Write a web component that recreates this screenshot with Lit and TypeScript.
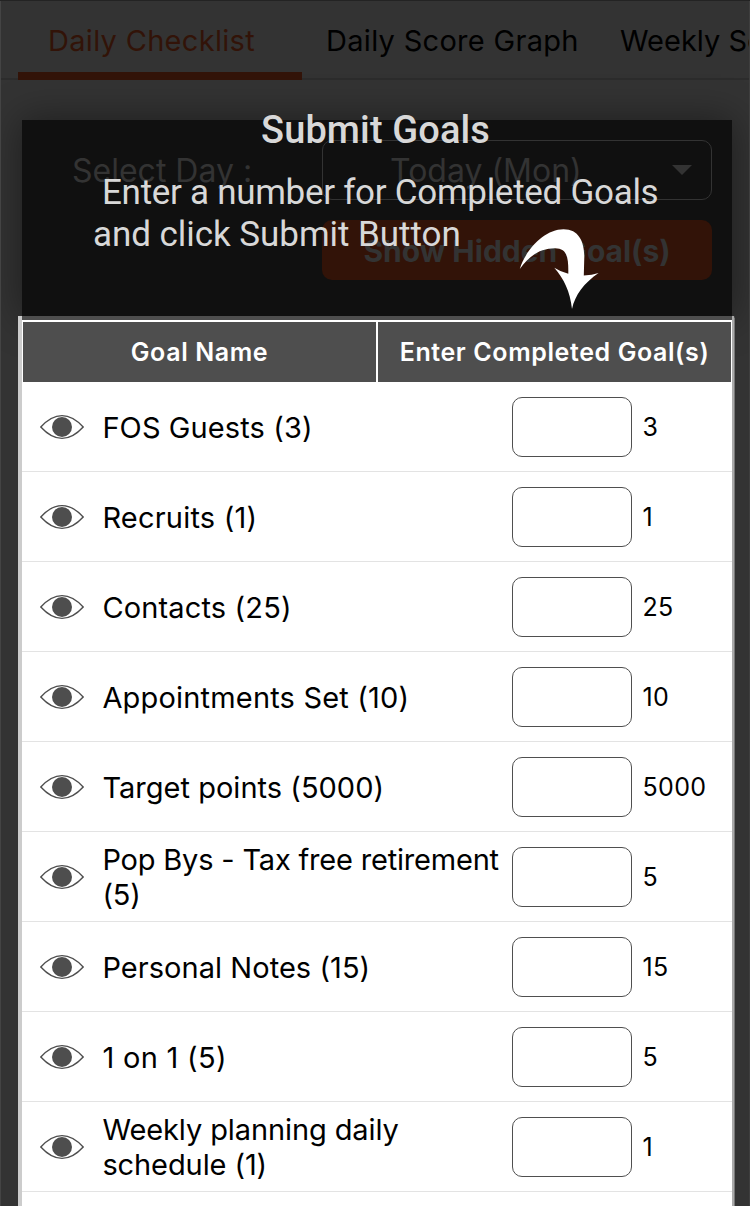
import { LitElement, html, css } from "lit";
import { customElement, property } from "lit/decorators.js";

interface Goal {
  name: string;
  target: number;
  tracking: number;
}

const GOALS: Goal[] = [
  { name: "FOS Guests", target: 3, tracking: 0.1 },
  { name: "Recruits", target: 1, tracking: 0.2 },
  { name: "Contacts", target: 25, tracking: 0.15 },
  { name: "Appointments Set", target: 10, tracking: 0.18 },
  { name: "Target points", target: 5000, tracking: 0.02 },
  { name: "Pop Bys - Tax free retirement", target: 5, tracking: -0.19 },
  { name: "Personal Notes", target: 15, tracking: 0.05 },
  { name: "1 on 1", target: 5, tracking: 0.3 },
  { name: "Weekly planning daily schedule", target: 1, tracking: -0.1 },
];

@customElement("goal-row")
export class GoalRow extends LitElement {
  @property({ attribute: false }) goal!: Goal;

  static styles = css`
    :host {
      display: flex;
      align-items: center;
      box-sizing: border-box;
      height: 90px;
      padding-left: 18px;
      border-bottom: 1px solid #e3e3e3;
      color: #000;
    }
    .eye {
      flex: none;
      width: 44px;
      height: 26px;
    }
    .name {
      flex: none;
      width: 428px;
      box-sizing: border-box;
      padding: 1px 4px 0 18.4px;
      font-size: 29px;
      line-height: 35px;
    }
    .entry {
      flex: none;
      box-sizing: border-box;
      width: 120px;
      height: 60px;
      margin: 0 10.5px 0 0;
      border: 1px solid #4f4f4f;
      border-radius: 10px;
      background: #fff;
      padding: 0 10px;
      font: inherit;
    }
    .target {
      font-size: 25px;
      line-height: 30px;
      padding-top: 1px;
      letter-spacing: 0.35px;
    }
  `;

  render() {
    return html`
      <svg class="eye" viewBox="0 0 44 26">
        <path
          d="M.8 13C7 6.200 13 1.600 22 1.600S37 6.200 43.200 13C37 19.800 31 24.400 22 24.400S7 19.800 .8 13Z"
          fill="none"
          stroke="#4e4e4e"
          stroke-width="1.400"
        />
        <circle cx="22" cy="13" r="10" fill="#4e4e4e" />
      </svg>
      <span class="name" style="letter-spacing: ${this.goal.tracking}px">${`${this.goal.name} (${this.goal.target})`}</span>
      <input class="entry" type="text" aria-label=${this.goal.name} />
      <span class="target">${this.goal.target}</span>
    `;
  }
}

@customElement("app-root")
export class AppRoot extends LitElement {
  static styles = css`
    :host {
      display: block;
      position: relative;
      box-sizing: border-box;
      width: 750px;
      height: 1206px;
      overflow: hidden;
      background: #333;
      border-top: 1px solid #232323;
      font-family: Inter, "Liberation Sans", sans-serif;
    }
    .frame {
      position: absolute;
      inset: 0;
      border-left: 1px solid #444;
      border-right: 1px solid #3e3e3e;
      pointer-events: none;
    }
    .tabs {
      display: flex;
      box-sizing: border-box;
      height: 79px;
      padding-left: 18px;
      white-space: nowrap;
      font-size: 29px;
      line-height: 80px;
      letter-spacing: 0.3px;
      background: linear-gradient(#2c2c2c, #2c2c2c) 0 77px / 100% 2px no-repeat;
    }
    .tab {
      flex: none;
      color: #000;
      padding: 0 24px;
      margin-right: -6px;
    }
    .score {
      width: 252px;
    }
    .weekly {
      letter-spacing: 0;
    }
    .active {
      box-sizing: border-box;
      width: 284px;
      padding: 0 0 0 30px;
      margin: 0;
      color: #321308;
      border-bottom: 8px solid #321308;
    }
    .panel {
      box-sizing: border-box;
      height: 196px;
      margin: 40px 18px 0 22px;
      padding: 20px 20px 0 50px;
      background: #101010;
      box-shadow: 0 0 36px 2px rgba(0, 0, 0, 0.4);
      display: grid;
      grid-template-columns: 250px 390px;
      grid-template-rows: 60px 60px;
      row-gap: 20px;
      color: #333;
    }
    .day {
      font-size: 32px;
      line-height: 61px;
    }
    .select {
      display: flex;
      align-items: center;
      justify-content: space-between;
      box-sizing: border-box;
      border: 1px solid #333;
      border-radius: 10px;
      padding: 1px 19px 0 67px;
      font-size: 32px;
    }
    .caret {
      width: 20px;
      height: 10px;
      margin-bottom: 1px;
    }
    .hidden {
      grid-column: 2;
      box-sizing: border-box;
      border: 0;
      border-radius: 10px;
      background: #321308;
      color: #333;
      font: 700 30px Inter, sans-serif;
      padding: 1px 0 0;
    }
    .sheet {
      position: relative;
      box-sizing: border-box;
      height: 890px;
      margin: 0 16px 0 18px;
      border-left: 4px solid #ccc;
      border-right: 2px solid #aaa;
      background: #fff;
      box-shadow: 0 0 1px 0.5px #777;
    }
    .head {
      display: grid;
      grid-template-columns: 353px 353px;
      column-gap: 2px;
      border-top: 4px solid #4e4e4e;
      padding: 2px 1px 0;
      text-align: center;
      color: #fff;
      font-size: 25px;
      font-weight: 600;
      letter-spacing: 0.6px;
      line-height: 60px;
      white-space: nowrap;
    }
    .cell {
      background: #4e4e4e;
    }
    .coach {
      position: absolute;
      inset: 0;
      color: #d8d8d8;
      font-family: Roboto, sans-serif;
      white-space: nowrap;
      pointer-events: none;
    }
    .title {
      position: absolute;
      left: 261px;
      top: 105px;
      font-size: 38px;
      line-height: 48px;
      font-weight: 500;
      letter-spacing: 0.12px;
    }
    .line {
      position: absolute;
      left: 102px;
      top: 171px;
      font-size: 35px;
      line-height: 42px;
      letter-spacing: -0.29px;
    }
    .second {
      left: 93px;
      top: 213px;
      letter-spacing: -0.05px;
    }
    .arrow {
      position: absolute;
      left: 518px;
      top: 226px;
      width: 84px;
      height: 84px;
    }
  `;

  render() {
    return html`
      <nav class="tabs">
        <span class="tab active">Daily Checklist</span>
        <span class="tab score">Daily Score Graph</span>
        <span class="tab weekly">Weekly Score Graph</span>
      </nav>
      <section class="panel">
        <span class="day">Select Day :</span>
        <div class="select">
          <span class="today">Today (Mon)</span>
          <svg class="caret" viewBox="0 0 20 10"><path d="M0 0H20L10 10Z" fill="#333" /></svg>
        </div>
        <button class="hidden">Show Hidden Goal(s)</button>
      </section>
      <section class="sheet">
        <div class="head">
          <span class="cell">Goal Name</span>
          <span class="cell">Enter Completed Goal(s)</span>
        </div>
        ${GOALS.map((goal) => html`<goal-row .goal=${goal}></goal-row>`)}
      </section>
      <div class="frame"></div>
      <div class="coach">
        <div class="title">Submit Goals</div>
        <div class="line">Enter a number for Completed Goals</div>
        <div class="line second">and click Submit Button</div>
        <svg class="arrow" viewBox="518 227 84 84">
          <path
            d="M519.800 269C525 251 544 229.300 563.500 229.300C579 229.300 584.300 242 584.300 257L583.800 275.500Q592 275 598.600 273C584 283 575 295 572 309C570 291 564 279 554.300 267.700Q561 272 568.300 273.700C568.500 258 567.500 248.300 555 248.300C540 248.300 529 256 519.800 269Z"
            fill="#fff"
          />
        </svg>
      </div>
    `;
  }
}
